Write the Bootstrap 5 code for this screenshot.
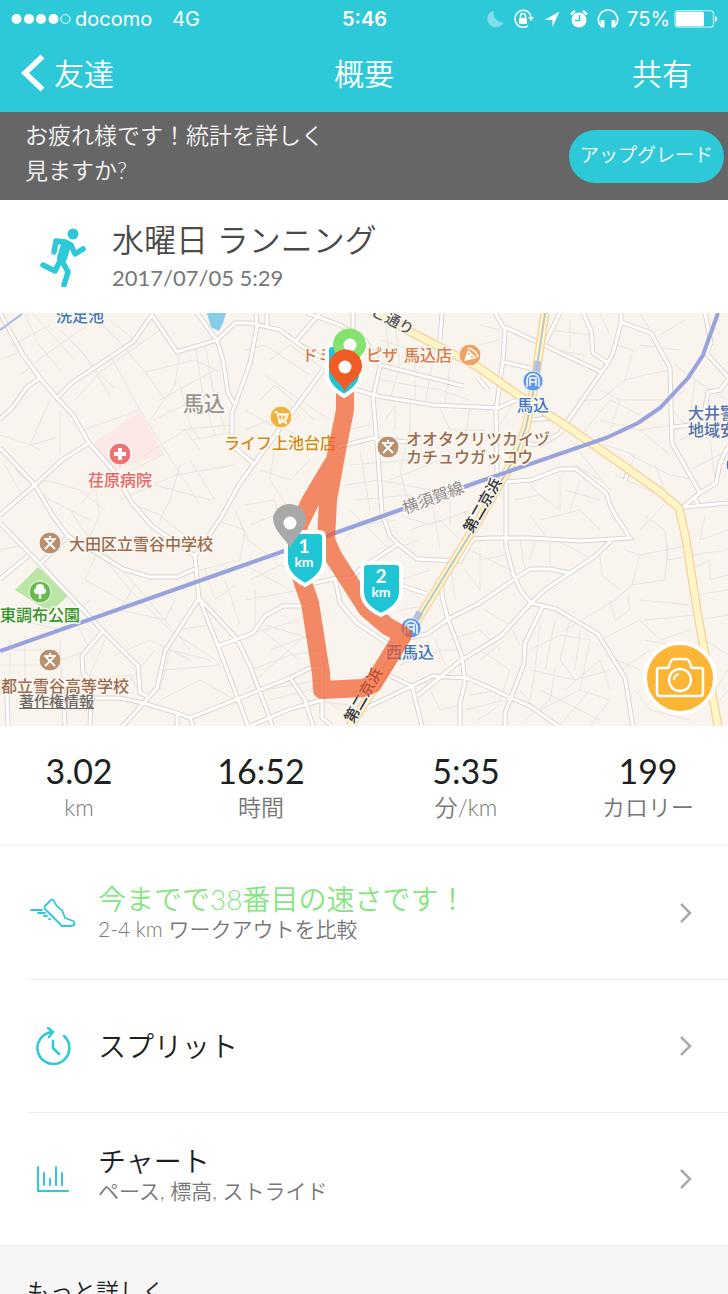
<!DOCTYPE html>
<html lang="ja">
<head>
<meta charset="utf-8">
<meta name="viewport" content="width=device-width, initial-scale=1">
<title>概要</title>
<link href="https://cdn.jsdelivr.net/npm/bootstrap@5.3.0/dist/css/bootstrap.min.css" rel="stylesheet">
<style>
  :root { --aqua: #2dc9d9; --ink: #1d1f20; --soft: #777; }
  body { font-family: Lato, "Noto Sans CJK JP", sans-serif; font-weight: 350; color: var(--ink); background: #fff; }
  svg { display: block; flex-shrink: 0; }
  .top-area { background: var(--aqua); color: #fff; }
  .status-row { height: 38px; padding: 0 10px 0 11px; font: 400 20px/38px Inter, sans-serif; }
  .status-row > * { flex: 1 1 0; }
  .nav-row { height: 74px; padding: 0 20px 4px; font-size: 30px; line-height: 44px; }
  .nav-row > * { flex: 1 1 0; }
  .nav-row a { color: #fff; text-decoration: none; }
  .nav-row h1 { font-size: 30px; line-height: 44px; font-weight: 350; }
  .promo { background: #666; color: #f4f4f4; min-height: 88px; padding: 0 4px 0 25px; }
  .promo p { font-size: 23px; line-height: 35px; width: 300px; padding-bottom: 6px; }
  .btn-upgrade { background: var(--aqua); color: #fff; font-size: 19px; line-height: 28px; font-weight: 350; height: 53px; width: 155px; padding: 0 0 2px; border: 0; border-radius: 27px; }
  .activity { min-height: 113px; padding: 0 38px 2px; }
  .activity h2 { font-size: 32px; line-height: 44px; font-weight: 350; color: #4a4a4a; }
  .activity time { font-size: 22px; line-height: 32px; font-weight: 400; color: var(--soft); }
  .map-box svg text { font-size: 16px; font-weight: 500; paint-order: stroke; stroke: #fbf8f3; stroke-width: 3px; stroke-linejoin: round; }
  .map-box path { fill: none; }
  .copyright { position: absolute; left: 19px; bottom: 14px; font-size: 15px; line-height: 22px; font-weight: 500; color: #6f6a64; }
  .btn-camera { position: absolute; right: 11px; bottom: 11px; width: 74px; height: 74px; padding: 0; border: 4px solid #fff; border-radius: 50%; background: #fdb535; }
  .stats { display: grid; grid-template-columns: 158fr 206fr 204fr 160fr; min-height: 120px; padding-top: 25px; border-bottom: 2px solid #f5f5f5; text-align: center; }
  .stats dt { font-size: 23px; line-height: 32px; font-weight: 350; color: var(--soft); }
  .stats dd { font-size: 34px; line-height: 40px; font-weight: 400; margin: 0; }
  .more-list a { min-height: 133px; padding: 0 36px 0 28px; color: var(--ink); text-decoration: none; }
  .more-list li + li::before { content: ""; display: block; height: 1px; margin: 0 0 -1px 27px; background: #ececec; }
  .row-icon { width: 50px; margin-right: 20px; }
  .row-title { font-size: 28px; line-height: 32px; }
  .row-title.best { color: #86e57f; }
  .row-sub { font-size: 21px; line-height: 28px; color: var(--soft); }
  .details { background: #f6f6f6; border-top: 1px solid #eee; padding: 28px 27px 20px; min-height: 100px; }
  .details h2 { font-size: 23px; line-height: 34px; font-weight: 350; }
</style>
</head>
<body>
<div class="d-flex flex-column vh-100 overflow-hidden">

  <header class="top-area flex-shrink-0">
    <div class="status-row d-flex align-items-center">
      <div class="d-flex align-items-center">
        <svg width="60" height="12" viewBox="0 0 60 12" fill="#fff"><circle cx="5.500" cy="6" r="5"/><circle cx="18" cy="6" r="5"/><circle cx="30" cy="6" r="5"/><circle cx="42.500" cy="6" r="5"/><circle cx="54.500" cy="6" r="4.500" fill="none" stroke="#fff"/></svg>
        <span class="ms-1">docomo</span><span class="ms-3 ps-1">4G</span>
      </div>
      <div class="text-center fw-semibold">5:46</div>
      <div class="d-flex align-items-center justify-content-end">
        <svg width="18" height="20" viewBox="0 0 18 20" class="me-2"><path d="M7 1.500a8.500 8.500 0 1 0 9.500 12A9.500 9.500 0 0 1 7 1.500z" fill="#7fe0ea"/></svg>
        <svg width="22" height="20" viewBox="0 0 22 20" class="me-2"><path d="M15.500 3A8.500 8.500 0 1 0 15 17M15.500 3a8.500 8.500 0 0 1 2.500 6" fill="none" stroke="#fff" stroke-width="1.500"/><path d="M15 8h6l-3 4z" fill="#fff"/><rect x="6" y="9" width="8" height="6" rx="1" fill="#fff"/><path d="M7.500 9V7a2.500 2.500 0 0 1 5 0v2" fill="none" stroke="#fff" stroke-width="1.500"/></svg>
        <svg width="18" height="20" viewBox="0 0 18 20" class="me-2"><path d="M1.500 11L16.500 2.500 9.500 18V11z" fill="#fff"/></svg>
        <svg width="20" height="20" viewBox="0 0 20 20" class="me-2"><circle cx="10" cy="11" r="7.500" fill="#fff"/><path d="M2 5.500l4-3.500M18 5.500l-4-3.500" stroke="#fff" stroke-width="2.500"/><path d="M10.500 6v5.500H6" fill="none" stroke="#2dc9d9" stroke-width="1.500"/></svg>
        <svg width="22" height="20" viewBox="0 0 22 20" class="me-2"><path d="M4 17C1 14 1 10 2 7.500a9.500 9.500 0 0 1 18 0C21 10 21 14 18 17" fill="none" stroke="#fff" stroke-width="1.700"/><rect x="3.500" y="11" width="4" height="7.500" rx="1" fill="#fff"/><rect x="14.500" y="11" width="4" height="7.500" rx="1" fill="#fff"/></svg>
        <span>75%</span>
        <svg width="44" height="18" viewBox="0 0 44 18" class="ms-1"><rect x="1" y=".7" width="38.500" height="16.500" rx="3" fill="none" stroke="#b5eef3" stroke-width="1.300"/><rect x="2" y="1.700" width="28" height="14.500" rx="2" fill="#fff"/><path d="M41 6c3 1 3 5 0 6z" fill="#fff"/></svg>
      </div>
    </div>
    <nav class="nav-row d-flex align-items-center" aria-label="ページ">
      <div class="d-flex"><a href="#" class="d-flex align-items-center"><svg width="26" height="38" viewBox="0 0 26 38"><path d="M22.500 2.500L5 19l17.500 16.500" fill="none" stroke="#fff" stroke-width="5.500"/></svg><span class="ms-2">友達</span></a></div>
      <h1 class="m-0 text-center">概要</h1>
      <div class="d-flex justify-content-end"><a href="#" class="pe-3">共有</a></div>
    </nav>
  </header>

  <section class="promo d-flex align-items-center justify-content-between flex-shrink-0">
    <p class="m-0">お疲れ様です！統計を詳しく見ますか?</p>
    <button type="button" class="btn-upgrade">アップグレード</button>
  </section>

  <section class="activity d-flex align-items-center flex-shrink-0">
    <svg width="50" height="62" viewBox="0 0 50 62" fill="none" stroke="#2dc9d9" stroke-width="5.500" stroke-linecap="round" stroke-linejoin="round"><circle cx="35" cy="9" r="5.500" fill="#2dc9d9" stroke="none"/><path d="M16 27l2-11 9 1 6 3 4 9 8-5M5 40l12 6 6-12 7 13-4 13"/><path d="M28 20l-4 13" stroke-width="10"/></svg>
    <div class="ms-4 d-flex flex-column">
      <h2 class="m-0">水曜日 ランニング</h2>
      <time datetime="2017-07-05T05:29">2017/07/05 5:29</time>
    </div>
  </section>

  <section class="map-box position-relative flex-shrink-0">
    <svg class="w-100 h-auto" viewBox="0 313 728 413" role="img" aria-label="ランニングコースの地図">
      <defs>
        <g id="school"><circle r="11" fill="#b98f6e" stroke="#fff"/><path d="M-6-4H6M0-7v3M-5 6L4-3M5 6L-4-3" stroke="#fff" stroke-width="2"/></g>
        <g id="station"><circle r="10" fill="#5b97ea" stroke="#dbe8fa"/><path d="M-6 6V-1a6 6 0 0 1 12 0v7M-3 5v-8h6v8M-3 1h6" stroke="#fff" stroke-width="1.500"/></g>
        <path id="roads" d="M0 313L23 355 40 378 57 398 73 415 89 443 113 470 132 503 152 526 172 540 195 556 197 579 199 598 218 646 238 699 248 726M57 398L73 382 133 342 152 315 177 352 217 340 235 323 250 323 280 330 300 345 330 362M197 313L217 340 223 360 228 393 235 405 232 413 232 435 234 447 253 463M235 405L250 363 257 327 256 313M40 378L27 387 12 408 0 419M89 443L62 460 35 485 0 515M0 448L35 485 53 516 68 536 97 553 123 569 150 577 177 577 197 568M195 556L222 516 240 483 323 370M0 523L40 564 103 631 138 666 140 693 147 696M0 579L28 556M40 564L68 536M103 631L82 656 83 673 100 690M60 698L92 698 120 698 143 703 177 713 190 718 240 698 290 678 310 668 322 668M190 718L193 726M177 713V726M7 695L8 726M63 695L65 726M91 698L90 726M199 598L237 639 250 666 268 713 272 726M199 598L165 651 157 688 123 726M218 646L240 638 253 633 265 616 283 606 307 606M310 584L333 579 352 578 360 569 398 544 417 559 460 561 473 539 490 538 530 538 580 541 630 538 616 516M382 513L390 536 398 544M380 367L373 397 377 443 382 513M335 579L340 603 357 623 387 643M322 668V718L332 726M250 726L290 709 322 700M290 678L305 700 313 726M370 706L412 686 433 676 467 678 490 688 511 698 530 706 558 726M390 676L412 686 422 726M417 696L460 661 501 636 531 603 546 589 595 556 611 541M403 586L427 594M442 580V596L448 619 462 656 465 683 460 703V726M410 638L427 634 448 619 478 604 516 578 530 569 550 569 570 573M506 482V546L513 574 521 591 531 603 556 609 598 634 625 678 633 726M543 606L525 643 524 664 505 713V726M295 342L320 313M307 313L340 325 365 340 380 365 463 386M353 313V330M357 390L377 396 433 405 498 408 521 398M337 447L373 438 407 442M267 313V327M442 313L440 340M495 313L505 330 503 360 496 410 497 480M505 327L601 372M503 362L530 368M560 313L545 343M583 313L591 330 593 353 608 363 565 425 560 433 541 445 520 443M621 313L621 323 613 353 608 363M621 322L651 333 670 368 672 443 700 493 683 507 728 503M705 313L711 343 706 353 728 377M728 380L720 390 708 392 704 415M673 427L691 425M700 493L716 483 720 463 728 447M506 482L531 480 560 469 576 469 606 493 611 507 618 520M531 420L550 418M628 473L625 480M695 498L698 505M478 378L488 390"/>
        <path id="yellow" d="M360 305L407 330 478 367 518 395 565 425 611 457 658 490 679 508 686 539 698 616 718 726M545 313L533 393 526 427 515 457 498 487 480 518 420 616 393 659 350 726"/>
      </defs>
      <rect y="313" width="728" height="413" fill="#f9f5ee"/>
      <path d="M94 442L140 412 164 454 113 471z" style="fill:#fce9e7"/>
      <path d="M15 590L38 567 68 596 50 612z" style="fill:#b9e6a5"/>
      <path d="M207 313h19l-3 10-4 8-8-4z" style="fill:#85cdea"/>
      <path stroke="#e7e5e0" stroke-width="1" d="M25 313L37 342 60 370M32 313L75 360M60 330L85 355 110 396M90 313L118 340 145 372 165 400M0 360L25 350M20 375L45 355 95 320M12 345L50 325M110 320L140 345M75 400L100 372 160 330M83 430L140 410 165 450 200 505M140 410L110 355M76 345L100 375 115 388M150 420L175 385 180 350M153 420L205 395M160 400L215 370M145 372L195 360 220 372M195 345L203 395 215 435M205 342L213 390 225 430M180 385L190 425 200 440M180 430L230 425M190 440L235 432M145 455L185 430 200 450M165 454L120 475M120 500L175 475 235 465M135 505L160 515 190 540M180 465L170 500 160 520M190 460L215 500M155 485L210 500M50 400L30 445 40 450M60 412V455M0 435L30 445 55 438M5 465L25 500M15 470L50 500 90 520M20 500L45 480 80 490 105 510M95 485L100 516 90 535M110 470L80 505M70 510L90 540 130 590 170 630 215 660M85 530L140 590 190 650M100 545L85 580 130 605M135 585L120 610 165 620 175 600M0 550L25 545M0 615L60 630 90 600M75 620L90 650 60 660M10 640V690M25 635V695M0 665H60M5 650H60M60 640L62 690M105 640L90 675 110 690M115 655L150 640 190 660M130 680L155 650M80 680L130 675 138 690M160 690L170 650 210 660M165 670L220 665M160 700L200 680 235 700M175 630L210 625M205 570L215 600 235 585M225 580L240 625M200 570L240 560 245 530 215 520M235 510L248 540 275 560M245 565L290 590M250 580L280 565 305 575M245 600L300 590M255 590V625L300 660M245 635L300 620M265 625L315 640M270 650L310 635M250 670L290 655 320 650M245 690L300 640M265 690L320 680M270 700L310 690 340 710M300 700L350 705M285 400L300 415 280 430 245 410M260 400L275 385 315 420M265 375L300 400 330 420M270 360L290 345 325 370M245 350L265 345 310 375M245 430L270 420 305 440M260 470L290 480 310 460M245 505L275 500 280 520M250 525L300 505M275 445L270 480 290 510M345 430L370 425M350 465L410 460M345 485L380 480 430 490M355 500L410 495M360 450L370 510M350 510L390 550 420 540M360 525L395 520M345 540L360 520M380 340L430 355M385 320L390 360M395 325L400 365 390 400M415 345V400M435 350L425 405M450 365L445 405M380 380L440 390 470 400M385 420L395 405V430M410 405V430L400 470 410 510M440 408L450 430 485 430M470 405L465 440M390 480L440 460M400 515L430 525 470 510M430 490L440 550M450 490V525M410 530L440 520 460 540M430 570L400 580 420 600M450 560L455 600M465 570L480 590M470 550L510 570M480 550V590M480 560L505 555M400 610L430 605M450 640L480 630 500 650M435 640L445 665M400 665L440 650 460 650M425 680L440 710 460 705M470 695L500 690M465 710L505 700M480 650L510 670 500 700M485 610L510 625 520 645M520 540L525 570M535 540L530 560M550 540V565M560 542L595 560M600 555L602 575 620 590M625 550L640 555 632 585 615 600 565 630M640 555L690 545M632 585L665 580 668 545M645 516L665 530 668 560 695 555M640 530L668 500M540 520L580 510 600 530M530 516L545 535M515 500L540 495 560 510M530 485L545 500M560 475V510M580 480L570 510M565 490L600 500M515 400L500 425M480 325L500 330M478 345L500 340M550 330L590 335M555 350L585 355M570 320V350M615 345L633 350 625 380 645 375 670 370M625 380L600 400 575 400M600 390L620 400 665 400M585 430L610 400 640 415M620 400L610 430M600 420L640 430 670 425M590 450L600 435M605 445L635 455 625 480M640 430L670 455M630 455L670 475 695 480M615 475L670 500M655 465L665 490M570 440L610 490M575 465L600 480M680 350L640 345M660 335L685 320M675 365L695 380 728 400M685 390L670 400M695 380L690 415M672 410L700 440 728 430M680 440L700 430M690 470L728 450M710 440L715 480M640 313L650 330M600 313L610 335M705 516L700 540 728 530M690 555L728 550M690 570L710 560V580L728 575M695 595L728 590M700 620L728 615M705 640L728 655M715 690L728 670M720 700L728 690M640 600L690 605M645 620L695 615M610 600L615 620 630 610 628 595M640 620L660 640 690 630M645 640L670 645M600 640L640 620M605 655L640 670M620 670L650 650M635 690L650 710 690 720M530 650L560 635 590 640M540 625L535 670 530 700M555 620L545 670M570 620L560 660 575 680M580 630L575 670M590 640L580 690M530 670L575 680 610 670M540 690L600 720M555 670L550 700 525 720M565 690L600 660 610 690M540 710L580 690 610 700 590 726M560 725L590 690M520 690L550 726M480 660L505 640M478 720L500 705"/>
      <use href="#roads" stroke="#dbd4cc" stroke-width="5" fill="none"/>
      <use href="#roads" stroke="#fff" stroke-width="3" fill="none"/>
      <use href="#yellow" stroke="#f6cf9c" stroke-width="9" fill="none"/>
      <use href="#yellow" stroke="#fff6c8" stroke-width="6.500" fill="none"/>
      <path d="M545 313L533 393 526 427 515 457 498 487 480 518 413 627" stroke="#b5c8ce" stroke-width="2"/>
      <path d="M538 361L534 390M420 612L412 626" stroke="#a7b8df" stroke-width="7" opacity=".8"/>
      <path d="M0 651L250 563 383 516 478 482 606 438 638 423 660 408 688 378 703 355 718 313" stroke="#98a2dd" stroke-width="4"/>
      <path d="M0 330L22 314" stroke="#a7b9e5" stroke-width="2"/>

      <text x="56" y="322" fill="#4277bd">洗足池</text>
      <text x="183" y="411" fill="#99948e" style="font-size:21px">馬込</text>
      <text x="88" y="486" fill="#ea6463">荏原病院</text>
      <text x="302" y="361" fill="#d87947">ドミノ・ピザ</text>
      <text x="404" y="361" fill="#d87947">馬込店</text>
      <text x="224" y="449" fill="#d28b16">ライフ上池台店</text>
      <text x="406" y="445" fill="#9b6a4b">オオタクリツカイヅ</text>
      <text x="406" y="463" fill="#9b6a4b">カチュウガッコウ</text>
      <text x="517" y="411" fill="#3e75bd">馬込</text>
      <text x="688" y="419" fill="#5270aa">大井警察</text>
      <text x="688" y="436" fill="#5270aa">地域安全</text>
      <text x="69" y="550" fill="#9b6a4b">大田区立雪谷中学校</text>
      <text x="0" y="621" fill="#359427">東調布公園</text>
      <text x="1" y="692" fill="#9b6a4b">都立雪谷高等学校</text>
      <text x="386" y="658" fill="#3e75bd">西馬込</text>
      <text transform="translate(405 514) rotate(-20)" fill="#8e8c89" style="font-size:16px;font-weight:400">横須賀線</text>
      <text transform="translate(357 308) rotate(27)" fill="#555" style="font-size:15px">まど通り</text>
      <text transform="translate(472 534) rotate(-60)" fill="#333" style="font-size:15px">第二京浜</text>
      <text transform="translate(353 724) rotate(-60)" fill="#333" style="font-size:15px">第二京浜</text>

      <g transform="translate(120 454)"><circle r="11" fill="#ee7173" stroke="#fff"/><path d="M0-6V6M-6 0H6" stroke="#fff" stroke-width="4"/></g>
      <g transform="translate(281 417)"><circle r="11" fill="#efb13f" stroke="#fff"/><path d="M-7-5h3l2 8h7l2-6H-3M-2 3v2h7" stroke="#fff" stroke-width="1.500"/><path d="M-2-2h8M1-3v5M4-3v5" stroke="#fff"/><circle cx="-1" cy="6" r="1.200" fill="#fff"/><circle cx="5" cy="6" r="1.200" fill="#fff"/></g>
      <g transform="translate(470 355)"><circle r="11" fill="#f1a263" stroke="#fff"/><path d="M-6 6L-2-5 7 3z" style="fill:#fff"/><path d="M-2-7Q6-5 8 2" stroke="#fff" stroke-width="1.500"/><circle cx="-1" cy="-1" r="1" fill="#f1a263"/><circle cx="2" cy="2" r="1" fill="#f1a263"/></g>
      <g transform="translate(40 592)"><circle r="11" fill="#6cbb51" stroke="#fff"/><path d="M0-1V7" stroke="#fff" stroke-width="2.500"/><circle cy="-4" r="4" fill="#fff"/><circle cx="-3" cy="-1" r="3" fill="#fff"/><circle cx="3" cy="-1" r="3" fill="#fff"/></g>
      <use href="#school" x="388" y="447"/>
      <use href="#school" x="50" y="543"/>
      <use href="#school" x="50" y="660"/>
      <use href="#station" x="533" y="381"/>
      <use href="#station" x="411" y="628"/>
      <circle cx="736" cy="465" r="10" fill="#5877ba" stroke="#fff"/>

      <path d="M345 390V410L338 445 328 500 326 540 333 556 367 609 387 626 403 635 373 684 363 688 322 690 321 673 310 603 303 583 295 555 299 525 311 500 324 478 335 460 341 430" stroke="#f15a2b" stroke-opacity=".7" stroke-width="18" stroke-linejoin="round"/>

      <g stroke="#fff" stroke-width="4" stroke-linejoin="round">
        <path d="M327 350q0-5 5-5h24q5 0 5 5v25q0 11-17 21-17-10-17-21z" style="fill:#20c5d5"/>
        <path d="M286 537q0-5 5-5h28q5 0 5 5v24q0 14-19 24-19-10-19-24z" style="fill:#20c5d5"/>
        <path d="M362 568q0-5 5-5h29q5 0 5 5v24q0 14-20 23-19-9-19-23z" style="fill:#20c5d5"/>
      </g>
      <g fill="#fff" text-anchor="middle">
        <text x="304" y="553" style="font-size:19px;font-weight:700;stroke:none">1</text>
        <text x="304" y="567" style="font-size:14px;font-weight:700;stroke:none">km</text>
        <text x="381" y="583" style="font-size:19px;font-weight:700;stroke:none">2</text>
        <text x="381" y="597" style="font-size:14px;font-weight:700;stroke:none">km</text>
      </g>
      <path d="M349 369C346 361 333 356 333 345a16 16 0 0 1 33 0C366 356 352 361 349 369z" style="fill:#86e26f"/><circle cx="350" cy="345" r="6.500" fill="#fff"/>
      <path d="M290 549C288 540 273 532 273 517a17 17 0 0 1 33 0C306 532 292 540 290 549z" style="fill:#a8a8a8"/><circle cx="290" cy="523" r="6.500" fill="#fff"/>
      <path d="M345 392C343 383 329 378 329 366a16.500 16.500 0 0 1 33 0C362 378 347 383 345 392z" style="fill:#f15b25"/><circle cx="345" cy="367" r="6.500" fill="#fff"/>
    </svg>
    <a href="#" class="copyright">著作権情報</a>
    <button type="button" class="btn-camera" aria-label="写真を追加"><svg class="mx-auto" width="50" height="42" viewBox="0 0 50 42" fill="none" stroke="#fff" stroke-width="2.500" stroke-linejoin="round"><path d="M4 11h8q2 0 2-2l2-5q1-2 3-2h12q2 0 3 2l2 5q0 2 2 2h8q2 0 2 2v23q0 3-3 3H5q-3 0-3-3V13q0-2 2-2z"/><circle cx="25" cy="23" r="11"/><path d="M19 23q0-5 5-6" stroke-width="2"/></svg></button>
  </section>

  <dl class="stats m-0 flex-shrink-0">
    <div class="d-flex flex-column-reverse justify-content-end"><dt>km</dt><dd>3.02</dd></div>
    <div class="d-flex flex-column-reverse justify-content-end"><dt>時間</dt><dd>16:52</dd></div>
    <div class="d-flex flex-column-reverse justify-content-end"><dt>分/km</dt><dd>5:35</dd></div>
    <div class="d-flex flex-column-reverse justify-content-end"><dt>カロリー</dt><dd>199</dd></div>
  </dl>

  <ul class="more-list list-unstyled m-0 flex-shrink-0">
    <li><a href="#" class="d-flex align-items-center">
      <span class="row-icon"><svg class="mx-auto" width="46" height="30" viewBox="0 0 46 30" fill="none" stroke="#2dc9d9" stroke-width="1.800" stroke-linejoin="round" stroke-linecap="round"><path d="M15 8L21 2q2-1 3 1 3 7 8 9l3 8 8 3q2 1 1 4-1 1-4 1h-8L15 11q-1-2 0-3zM1 12h11M8 15h7M14 18h3M19 21h1"/></svg></span>
      <span class="flex-grow-1 d-flex flex-column"><span class="row-title best">今までで38番目の速さです！</span><span class="row-sub">2-4 km ワークアウトを比較</span></span>
      <svg width="12" height="22" viewBox="0 0 12 22"><path d="M1 2l9 9-9 9" fill="none" stroke="#aaa" stroke-width="2.500"/></svg>
    </a></li>
    <li><a href="#" class="d-flex align-items-center">
      <span class="row-icon"><svg class="mx-auto" width="36" height="38" viewBox="0 0 36 38" fill="none" stroke="#2dc9d9" stroke-width="2.500" stroke-linecap="round" stroke-linejoin="round"><path d="M18 5A16 16 0 1 0 29 9M13 1l5 4-4 5M18 14v7l6 6"/></svg></span>
      <span class="flex-grow-1 row-title">スプリット</span>
      <svg width="12" height="22" viewBox="0 0 12 22"><path d="M1 2l9 9-9 9" fill="none" stroke="#aaa" stroke-width="2.500"/></svg>
    </a></li>
    <li><a href="#" class="d-flex align-items-center">
      <span class="row-icon"><svg class="mx-auto" width="32" height="28" viewBox="0 0 32 28" fill="none" stroke="#2dc9d9" stroke-width="2" stroke-linecap="round" stroke-linejoin="round"><path d="M1 2v24h30M7 8v12M13 14v6M19 2v18M25 8v12"/></svg></span>
      <span class="flex-grow-1 d-flex flex-column pb-2"><span class="row-title">チャート</span><span class="row-sub">ペース, 標高, ストライド</span></span>
      <svg width="12" height="22" viewBox="0 0 12 22"><path d="M1 2l9 9-9 9" fill="none" stroke="#aaa" stroke-width="2.500"/></svg>
    </a></li>
  </ul>

  <section class="details flex-shrink-0">
    <h2 class="m-0">もっと詳しく</h2>
  </section>
</div>
<script src="https://cdn.jsdelivr.net/npm/bootstrap@5.3.0/dist/js/bootstrap.bundle.min.js"></script>
</body>
</html>
